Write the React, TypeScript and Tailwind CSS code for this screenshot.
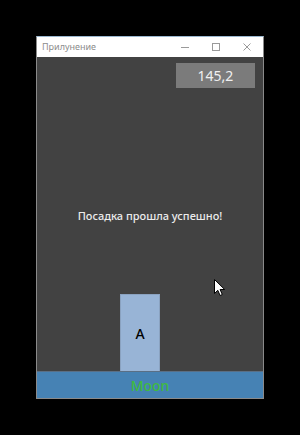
import React from 'react';

const font = { fontFamily: '"Noto Sans", "Open Sans", sans-serif' };

export default function App() {
  return (
    <div className="w-[300px] h-[435px] bg-black pt-[36px] pl-[36px]" style={font}>
      <div className="w-[228px] h-[363px] flex flex-col border border-[#8a8a8a] border-t-[#9bb8d0]">
        {/* title bar */}
        <div className="h-[20px] bg-white flex items-center pl-[5px] text-[9px] text-[#8c8c8c]">
          <span className="flex-1">Прилунение</span>
          <div className="flex items-center gap-[23px] pr-[12px] text-[#9a9a9a]">
            <svg width="8" height="8" viewBox="0 0 8 8"><path d="M0 4.5h8" stroke="currentColor" strokeWidth="1" /></svg>
            <svg width="8" height="8" viewBox="0 0 8 8"><rect x="0.5" y="0.5" width="7" height="7" fill="none" stroke="currentColor" strokeWidth="1" /></svg>
            <svg width="8" height="8" viewBox="0 0 8 8"><path d="M0.5 0.5l7 7M7.5 0.5l-7 7" stroke="currentColor" strokeWidth="1" /></svg>
          </div>
        </div>

        {/* canvas */}
        <div className="flex-1 bg-[#424242] flex flex-col relative">
          <div className="flex justify-end pt-[6px] pr-[8px]">
            <div className="w-[79px] h-[25px] bg-[#7b7b7b] flex items-center justify-center text-[14px] text-[#f0f0f0]">
              145,2
            </div>
          </div>
          <div className="mt-[120px] text-center text-[11px] font-medium text-[#ececec]">
            Посадка прошла успешно!
          </div>
          <div className="flex-1" />
          <div className="ml-[83px] w-[40px] h-[77px] bg-[#98b4d6] border-x border-t border-[#8aa2c0] flex items-center justify-center text-[14px] font-medium text-black">
            A
          </div>
          <svg className="absolute left-[177px] top-[222px]" width="11" height="17" viewBox="0 0 11 17">
            <path d="M0.5 0.5v14l3.3-3.2 2.3 5.2 2.2-1-2.2-5h4.6z" fill="#fff" stroke="#000" strokeWidth="1" />
          </svg>
        </div>

        {/* moon */}
        <div className="h-[27px] bg-[#4682b4] border-t border-[#5a6f85] flex items-center justify-center text-[14px] font-medium text-[#3fbb3f]">
          Moon
        </div>
      </div>
    </div>
  );
}
